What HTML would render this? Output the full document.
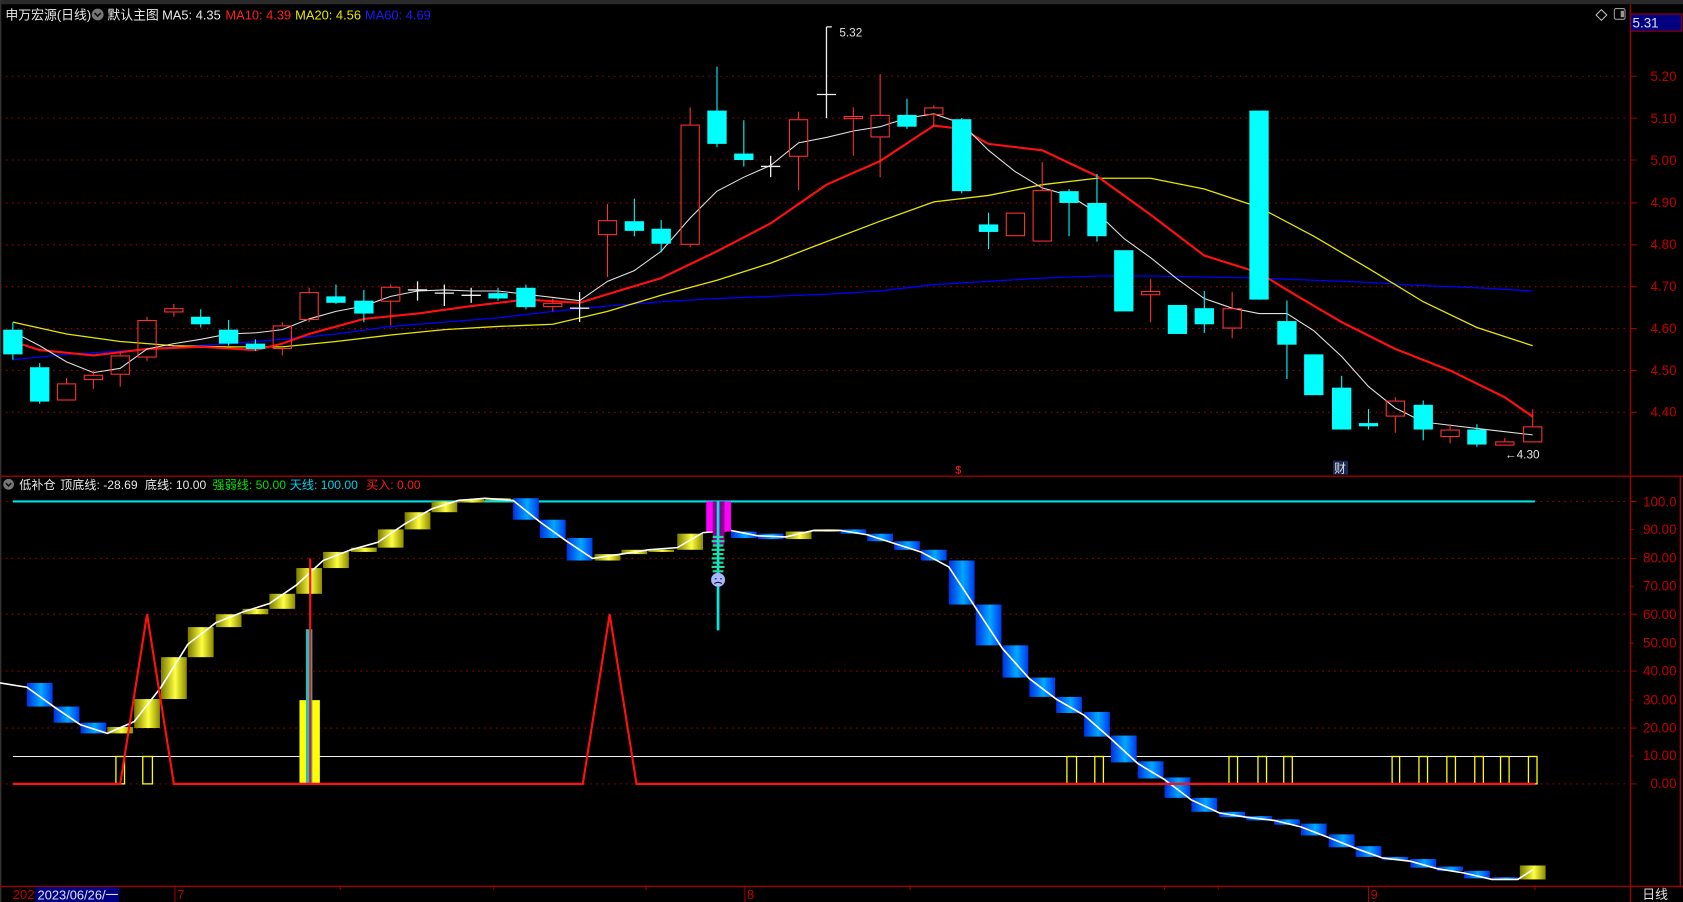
<!DOCTYPE html>
<html><head><meta charset="utf-8"><style>
html,body{margin:0;padding:0;background:#000;overflow:hidden}
svg{display:block}
text{font-family:"Liberation Sans","Noto Sans CJK SC",sans-serif}
</style></head><body>
<svg width="1683" height="902" viewBox="0 0 1568 840" preserveAspectRatio="none" xmlns="http://www.w3.org/2000/svg">
<defs>
<linearGradient id="gb" x1="0" x2="1" y1="0" y2="0"><stop offset="0" stop-color="#0030e0"/><stop offset="0.55" stop-color="#00a8ff"/><stop offset="1" stop-color="#0038f0"/></linearGradient>
<linearGradient id="gy" x1="0" x2="1" y1="0" y2="0"><stop offset="0" stop-color="#7a7a00"/><stop offset="0.55" stop-color="#ffff40"/><stop offset="1" stop-color="#8a8a00"/></linearGradient>
</defs>
<rect width="1568" height="840" fill="#000"/>
<rect x="0" y="0" width="1568" height="4" fill="#2a2a2a"/>
<line x1="0.5" y1="0" x2="0.5" y2="840" stroke="#333" stroke-width="1.5"/>
<!-- header -->
<text x="5" y="18" font-size="12" fill="#e8e8e8">申万宏源(日线)</text>
<circle cx="91" cy="13.5" r="5.5" fill="#777"/><path d="M88 12l3 3 3-3" stroke="#111" stroke-width="1.5" fill="none"/>
<text x="100" y="18" font-size="12" fill="#e8e8e8">默认主图</text>
<text x="151" y="18" font-size="12" fill="#e8e8e8">MA5: 4.35</text>
<text x="210" y="18" font-size="12" fill="#ff2020">MA10: 4.39</text>
<text x="275" y="18" font-size="12" fill="#e6e600">MA20: 4.56</text>
<text x="340" y="18" font-size="12" fill="#1a1aff">MA60: 4.69</text>
<path d="M1492 9l5 5-5 5-5-5z" stroke="#bbb" fill="none"/>
<rect x="1504" y="8" width="10" height="10" rx="1.5" stroke="#999" fill="none"/><rect x="1510" y="10" width="3" height="6" fill="#999"/>
<!-- right axis -->
<line x1="1519" y1="4" x2="1519" y2="840" stroke="#a00000" stroke-width="1.3"/>
<line x1="1565.5" y1="443" x2="1565.5" y2="826" stroke="#a00000" stroke-width="1.3"/>
<rect x="1519" y="13" width="48" height="16" fill="#000080" stroke="#a00000"/>
<text x="1521" y="25.5" font-size="12.5" fill="#e0e0ff">5.31</text>
<g font-size="12.5" fill="#c00000" text-anchor="end">
<text x="1562" y="75.5">5.20</text><text x="1562" y="114.5">5.10</text><text x="1562" y="153.5">5.00</text><text x="1562" y="193">4.90</text><text x="1562" y="232">4.80</text><text x="1562" y="271">4.70</text><text x="1562" y="310">4.60</text><text x="1562" y="349">4.50</text><text x="1562" y="388">4.40</text>
<text x="1562" y="471.5">100.0</text><text x="1562" y="497.5">90.00</text><text x="1562" y="524">80.00</text><text x="1562" y="550">70.00</text><text x="1562" y="576.5">60.00</text><text x="1562" y="603">50.00</text><text x="1562" y="629">40.00</text><text x="1562" y="656">30.00</text><text x="1562" y="682">20.00</text><text x="1562" y="708">10.00</text><text x="1562" y="734">0.00</text>
</g>
<g stroke="#a00000" stroke-width="1">
<path d="M1519 71h6M1519 110h6M1519 149h6M1519 189h6M1519 228h6M1519 267h6M1519 306h6M1519 345h6M1519 384h6"/>
<path d="M1519 467h6M1519 493h3M1519 520h6M1519 546h3M1519 572h6M1519 599h3M1519 625h6M1519 652h3M1519 678h6M1519 704h3M1519 730h6"/>
</g>
<g stroke="#a00000" stroke-width="1" stroke-dasharray="1.5 4">
<path d="M0 71H1515M0 110H1515M0 149H1515M0 189H1515M0 228H1515M0 267H1515M0 306H1515M0 345H1515M0 384H1515"/>
<path d="M0 467H1515M0 520H1515M0 572H1515M0 625H1515M0 678H1515M0 730H1515"/>
</g>
<line x1="0" y1="443.5" x2="1568" y2="443.5" stroke="#a00000" stroke-width="1.3"/>
<line x1="0" y1="825.5" x2="1568" y2="825.5" stroke="#a00000" stroke-width="1.3"/>
<!-- MAs -->
<polyline fill="none" stroke="#0000ff" stroke-width="1.2" points="12,335 62,330 112,327 162,323 213,320 263,316 313,311 364,304 414,300 464,296 515,290 566,285 616,281 668,278 718,276 770,274 820,271 870,265 921,262 971,259 1022,257 1072,257 1122,258 1173,259 1224,261 1275,263 1326,266 1376,268 1428,271"/>
<polyline fill="none" stroke="#e6e600" stroke-width="1.2" points="12,300 62,311 112,318 162,322 213,323 263,323 313,318 364,312 414,307 464,304 515,302 566,290 616,275 668,261 718,245 770,225 820,206 870,188 921,182 971,172 1022,166 1072,166 1122,176 1173,193 1224,220 1275,250 1326,281 1376,305 1428,322"/>
<polyline fill="none" stroke="#ff1010" stroke-width="2" points="12,318 37,326 87,331 137,325 187,323 238,326 263,320 288,311 339,297 389,292 439,285 490,279 540,282 566,274 616,259 668,234 718,208 770,172 820,150 870,117 896,120 921,134 971,140 1022,164 1072,200 1122,238 1173,254 1199,270 1250,300 1300,325 1351,345 1402,370 1428,388"/>
<polyline fill="none" stroke="#e0e0e0" stroke-width="1" points="12,309 37,322 62,337 87,347 112,343 137,325 162,320 187,316 213,311 238,310 263,307 288,297 313,290 339,285 364,276 389,271 414,270 439,271 464,271 490,274 515,277 540,280 566,262 591,252 616,234 643,203 668,178 693,165 718,154 744,133 770,128 795,122 820,118 845,110 870,106 896,115 921,140 946,160 971,175 996,182 1022,198 1047,222 1072,240 1097,260 1122,278 1148,287 1173,292 1199,292 1224,308 1250,332 1275,360 1300,380 1326,393 1351,396 1376,399 1402,402 1428,405"/>
<!-- candles cyan -->
<g fill="#00ffff" stroke="#00ffff">
<path stroke-width="1" d="M12 300V335M37 338V376M187 288V305M213 298V322M238 316V327M313 265V283M339 270V300M464 268V280M490 265V288M591 185V220M616 205V235M668 62V137M693 112V155M845 92V120M896 110V180M921 198V232M996 176V220M1022 162V225M1097 284V311M1122 271V310M1173 103V279M1199 280V353M1224 330V368M1250 350V400M1275 381V400M1326 373V410M1376 395V416"/>
<g stroke="none">
<rect x="3" y="307" width="18" height="23"/><rect x="28" y="342" width="18" height="32"/><rect x="178" y="295" width="18" height="7"/><rect x="204" y="307" width="18" height="13"/><rect x="229" y="320" width="18" height="5"/><rect x="304" y="276" width="18" height="6"/><rect x="330" y="280" width="18" height="12"/><rect x="455" y="273" width="18" height="5"/><rect x="481" y="268" width="18" height="18"/><rect x="582" y="206" width="18" height="9"/><rect x="607" y="213" width="18" height="14"/><rect x="659" y="103" width="18" height="31"/><rect x="684" y="143" width="18" height="6"/><rect x="836" y="107" width="18" height="11"/><rect x="887" y="111" width="18" height="67"/><rect x="912" y="209" width="18" height="7"/><rect x="987" y="178" width="18" height="11"/><rect x="1013" y="189" width="18" height="31"/><rect x="1038" y="233" width="18" height="57"/><rect x="1088" y="284" width="18" height="27"/><rect x="1113" y="287" width="18" height="15"/><rect x="1164" y="103" width="18" height="176"/><rect x="1190" y="299" width="18" height="22"/><rect x="1215" y="330" width="18" height="38"/><rect x="1241" y="361" width="18" height="39"/><rect x="1266" y="394" width="18" height="3"/><rect x="1317" y="377" width="18" height="23"/><rect x="1367" y="400" width="18" height="14"/>
</g></g>
<!-- candles red -->
<g fill="none" stroke="#ff3030" stroke-width="1">
<path d="M62 352V357M87 345V349M87 354V362M112 328V331M112 349V360M137 295V298M137 333V336M162 283V287M162 291V295M263 300V303M263 325V331M288 268V272M288 298V300M364 265V267M364 281V303M515 278V282M515 286V290M566 190V205M566 219V258M643 100V116M643 228V230M744 104V111M744 146V177M795 100V108M795 111V145M820 69V107M820 128V165M870 98V100M870 107V118M971 151V177M1072 260V271M1072 275V300M1148 272V287M1148 306V315M1300 370V373M1300 388V403M1351 395V400M1351 407V413M1402 408V411M1428 381V397"/>
<rect x="53.5" y="357.5" width="17" height="15"/><rect x="78.5" y="349.5" width="17" height="4"/><rect x="103.5" y="331.5" width="17" height="17"/><rect x="128.5" y="298.5" width="17" height="34"/><rect x="153.5" y="287.5" width="17" height="3"/><rect x="254.5" y="303.5" width="17" height="21"/><rect x="279.5" y="272.5" width="17" height="25"/><rect x="355.5" y="267.5" width="17" height="13"/><rect x="506.5" y="282.5" width="17" height="3"/><rect x="557.5" y="205.5" width="17" height="13"/><rect x="634.5" y="116.5" width="17" height="111"/><rect x="735.5" y="111.5" width="17" height="34"/><rect x="786.5" y="108.5" width="17" height="2"/><rect x="811.5" y="107.5" width="17" height="20"/><rect x="861.5" y="100.5" width="17" height="6"/><rect x="937.5" y="198.5" width="17" height="21"/><rect x="962.5" y="177.5" width="17" height="47"/><rect x="1063.5" y="271.5" width="17" height="3"/><rect x="1139.5" y="287.5" width="17" height="18"/><rect x="1291.5" y="373.5" width="17" height="14"/><rect x="1342.5" y="400.5" width="17" height="6"/><rect x="1393.5" y="411.5" width="17" height="3"/><rect x="1419.5" y="397.5" width="17" height="14"/>
</g>
<g stroke="#f0f0f0" stroke-width="1.2">
<path d="M389 262V280M380 270H398M414 265V285M405 273H423M439 268V282M430 275H448M540 272V300M531 287H549M718 145V165M709 155H727M770 25V110M761 88H779M770 25H775"/>
</g>
<text x="782" y="34" font-size="11" fill="#e0e0e0">5.32</text>
<text x="1402" y="427" font-size="11" fill="#e0e0e0">←4.30</text>
<text x="890" y="441" font-size="10" fill="#ff2020">$</text>
<rect x="1242" y="429" width="14" height="13" fill="#1a2a55"/><text x="1243" y="440" font-size="11" fill="#e0e0e0">财</text>
<!-- indicator header -->
<circle cx="8" cy="451" r="5" fill="#777"/><path d="M5.5 450l2.5 2.5 2.5-2.5" stroke="#111" stroke-width="1.4" fill="none"/>
<g font-size="11.3">
<text x="18" y="455.5" fill="#e8e8e8">低补仓</text>
<text x="56" y="455.5" fill="#e8e8e8">顶底线: -28.69</text>
<text x="135" y="455.5" fill="#e8e8e8">底线: 10.00</text>
<text x="198" y="455.5" fill="#00e000">强弱线: 50.00</text>
<text x="270" y="455.5" fill="#00d0e8">天线: 100.00</text>
<text x="341" y="455.5" fill="#ff1a1a">买入: 0.00</text>
</g>
<line x1="12" y1="467" x2="1430" y2="467" stroke="#00e0e0" stroke-width="2"/>
<line x1="12" y1="704.5" x2="1430" y2="704.5" stroke="#f0f0f0" stroke-width="1"/>
<g fill="url(#gb)">
<rect x="25" y="636" width="24" height="22"/><rect x="50" y="658" width="24" height="15"/><rect x="75" y="673" width="24" height="10"/><rect x="478" y="464" width="24" height="20"/><rect x="503" y="484" width="24" height="17"/><rect x="528" y="501" width="24" height="21"/><rect x="681" y="495" width="24" height="6"/><rect x="706" y="497" width="24" height="5"/><rect x="783" y="493" width="24" height="4"/><rect x="808" y="497" width="24" height="7"/><rect x="833" y="504" width="24" height="8"/><rect x="858" y="512" width="24" height="10"/><rect x="884" y="522" width="24" height="41"/><rect x="909" y="563" width="24" height="38"/><rect x="934" y="601" width="24" height="30"/><rect x="959" y="631" width="24" height="18"/><rect x="984" y="649" width="24" height="15"/><rect x="1010" y="663" width="24" height="23"/><rect x="1035" y="685" width="24" height="25"/><rect x="1060" y="709" width="24" height="16"/><rect x="1085" y="724" width="24" height="19"/><rect x="1110" y="743" width="24" height="13"/><rect x="1136" y="756" width="24" height="5"/><rect x="1161" y="760" width="24" height="4"/><rect x="1187" y="763" width="24" height="5"/><rect x="1212" y="767" width="24" height="11"/><rect x="1238" y="777" width="24" height="12"/><rect x="1263" y="788" width="24" height="10"/><rect x="1288" y="798" width="24" height="3"/><rect x="1314" y="800" width="24" height="8"/><rect x="1339" y="807" width="24" height="4"/><rect x="1364" y="811" width="24" height="7"/><rect x="1390" y="817" width="24" height="2"/>
</g>
<g fill="url(#gy)">
<rect x="100" y="677" width="24" height="6"/><rect x="125" y="651" width="24" height="27"/><rect x="150" y="612" width="24" height="39"/><rect x="175" y="584" width="24" height="28"/><rect x="201" y="572" width="24" height="12"/><rect x="226" y="567" width="24" height="5"/><rect x="251" y="553" width="24" height="14"/><rect x="276" y="529" width="24" height="24"/><rect x="301" y="514" width="24" height="15"/><rect x="327" y="510" width="24" height="4"/><rect x="352" y="493" width="24" height="17"/><rect x="377" y="477" width="24" height="16"/><rect x="402" y="467" width="24" height="10"/><rect x="427" y="465" width="24" height="3"/><rect x="452" y="464" width="24" height="2"/><rect x="554" y="516" width="24" height="6"/><rect x="579" y="512" width="24" height="4"/><rect x="604" y="512" width="24" height="2"/><rect x="631" y="497" width="24" height="15"/><rect x="732" y="495" width="24" height="7"/><rect x="758" y="493" width="24" height="2"/><rect x="1416" y="806" width="24" height="13"/>
</g>
<polyline fill="none" stroke="#fff" stroke-width="1.5" points="0,636 25,640 50,658 75,675 100,683 125,672 150,640 175,600 201,580 226,570 251,562 276,545 301,522 327,512 352,505 377,488 402,474 427,466 452,464 478,466 503,486 528,504 552,520 579,516 604,512 631,510 655,496 681,494 706,499 732,500 758,494 783,494 808,498 833,506 858,514 884,528 909,566 934,604 959,632 984,651 1010,666 1035,688 1060,711 1085,726 1110,745 1136,757 1161,761 1187,764 1212,770 1238,780 1263,790 1288,799 1314,802 1339,809 1364,813 1390,819 1414,819 1428,810"/>
<g fill="none" stroke="#ffff00" stroke-width="1.2">
<rect x="108" y="704.5" width="8" height="25.5"/><rect x="133" y="704.5" width="9" height="25.5"/><rect x="994" y="704.5" width="9" height="25.5"/><rect x="1020" y="704.5" width="8" height="25.5"/><rect x="1145" y="704.5" width="8" height="25.5"/><rect x="1172" y="704.5" width="8" height="25.5"/><rect x="1196" y="704.5" width="8" height="25.5"/><rect x="1297" y="704.5" width="7" height="25.5"/><rect x="1322" y="704.5" width="8" height="25.5"/><rect x="1348" y="704.5" width="8" height="25.5"/><rect x="1374" y="704.5" width="8" height="25.5"/><rect x="1398" y="704.5" width="8" height="25.5"/><rect x="1424" y="704.5" width="8" height="25.5"/>
</g>
<rect x="279" y="652" width="19" height="78" fill="#ffff00"/>
<rect x="285" y="586" width="6" height="144" fill="#20c0c0"/>
<line x1="289" y1="520" x2="289" y2="730" stroke="#ff1010" stroke-width="2"/>
<polyline fill="none" stroke="#ff1010" stroke-width="2" points="12,730 112,730 137,572 162,730 543,730 568,572 593,730 1430,730"/>
<rect x="658" y="467" width="23" height="28" fill="#ff00ff"/>
<rect x="664" y="467" width="11" height="40" fill="#8a008a"/>
<line x1="669" y1="467" x2="669" y2="587" stroke="#00e8e8" stroke-width="2.5"/>
<path d="M664 500h10M663 504h12M664 508h10M663 512h12M664 516h10M663 520h12M664 524h10M663 528h12M664 532h10" stroke="#20e0a0" stroke-width="2"/>
<circle cx="669" cy="540" r="6.5" fill="#a8b8ff"/>
<path d="M666 539h1.5M671 539h1.5M665.5 543.5q3.5-2.5 7 0" stroke="#112" stroke-width="1" fill="none"/>
<text x="12" y="837" font-size="12" fill="#c00000">202</text>
<rect x="33" y="826" width="78" height="14" fill="#000080"/>
<text x="35" y="837.5" font-size="12" fill="#e0e0ff">2023/06/26/一</text>
<g stroke="#a00000"><path d="M163 826v14M694 826v14M1275 826v14M317 826v3M460 826v3M602 826v3M848 826v3M1085 826v3M1135 826v3M1430 826v3"/></g>
<text x="165" y="837" font-size="12" fill="#c00000">7</text>
<text x="696" y="837" font-size="12" fill="#c00000">8</text>
<text x="1277" y="837" font-size="12" fill="#c00000">9</text>
<text x="1530" y="837" font-size="12" fill="#e0e0e0">日线</text>
</svg>
</body></html>
